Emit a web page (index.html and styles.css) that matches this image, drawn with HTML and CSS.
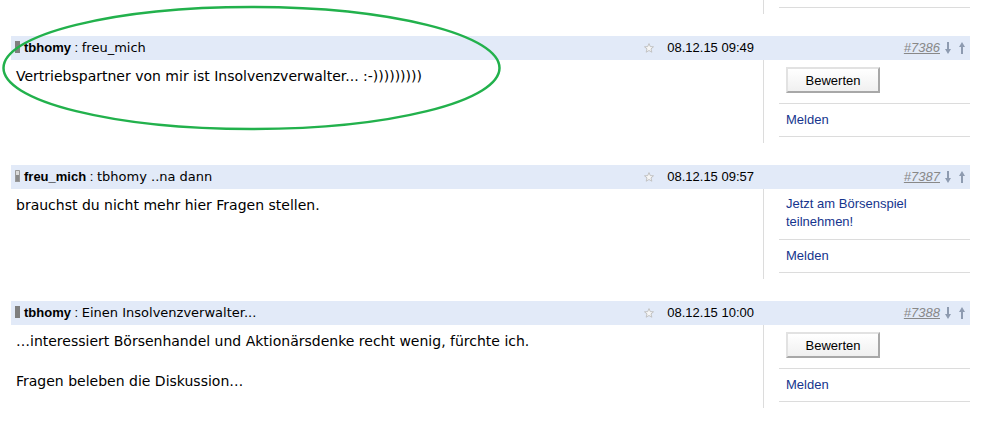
FILE: index.html
```html
<!DOCTYPE html>
<html lang="de">
<head>
<meta charset="utf-8">
<title>Forum</title>
<link rel="stylesheet" href="styles.css">
</head>
<body>
<div class="thread">
  <div class="row prev">
    <div class="main"></div>
    <div class="side"><div class="item stub"></div></div>
  </div>

  <div class="post">
    <div class="row head">
      <div class="hmain">
        <div class="who"><span class="lvl full"></span><b class="author">tbhomy</b><span class="colon"> : </span><span class="title">freu_mich</span></div>
        <div class="meta"><svg class="star" viewBox="0 0 10 10" width="10" height="10"><polygon points="5,0.6 6.3,3.6 9.5,3.8 7,5.9 7.8,9.2 5,7.5 2.2,9.2 3,5.9 0.5,3.8 3.7,3.6" /></svg><span class="date">08.12.15 09:49</span></div>
      </div>
      <div class="hside"><a class="num" href="#">#7386</a><svg class="arrow" viewBox="0 0 6 12" width="6" height="12"><path d="M2 0h2v7h2l-3 5l-3-5h2z" /></svg><svg class="arrow" viewBox="0 0 6 12" width="6" height="12"><path d="M2 12h2v-7h2l-3-5l-3 5h2z" /></svg></div>
    </div>
    <div class="row body">
      <div class="main"><p class="text">Vertriebspartner von mir ist Insolvenzverwalter... :-)))))))))</p></div>
      <div class="side">
        <div class="item btn"><button class="rate">Bewerten</button></div>
        <div class="item"><a class="link" href="#">Melden</a></div>
      </div>
    </div>
  </div>

  <div class="post">
    <div class="row head">
      <div class="hmain">
        <div class="who"><span class="lvl part"></span><b class="author">freu_mich</b><span class="colon"> : </span><span class="title">tbhomy ..na dann</span></div>
        <div class="meta"><svg class="star" viewBox="0 0 10 10" width="10" height="10"><polygon points="5,0.6 6.3,3.6 9.5,3.8 7,5.9 7.8,9.2 5,7.5 2.2,9.2 3,5.9 0.5,3.8 3.7,3.6" /></svg><span class="date">08.12.15 09:57</span></div>
      </div>
      <div class="hside"><a class="num" href="#">#7387</a><svg class="arrow" viewBox="0 0 6 12" width="6" height="12"><path d="M2 0h2v7h2l-3 5l-3-5h2z" /></svg><svg class="arrow" viewBox="0 0 6 12" width="6" height="12"><path d="M2 12h2v-7h2l-3-5l-3 5h2z" /></svg></div>
    </div>
    <div class="row body">
      <div class="main"><p class="text">brauchst du nicht mehr hier Fragen stellen.</p></div>
      <div class="side">
        <div class="item promo"><a class="link" href="#">Jetzt am Börsenspiel<br>teilnehmen!</a></div>
        <div class="item"><a class="link" href="#">Melden</a></div>
      </div>
    </div>
  </div>

  <div class="post">
    <div class="row head">
      <div class="hmain">
        <div class="who"><span class="lvl full"></span><b class="author">tbhomy</b><span class="colon"> : </span><span class="title">Einen Insolvenzverwalter...</span></div>
        <div class="meta"><svg class="star" viewBox="0 0 10 10" width="10" height="10"><polygon points="5,0.6 6.3,3.6 9.5,3.8 7,5.9 7.8,9.2 5,7.5 2.2,9.2 3,5.9 0.5,3.8 3.7,3.6" /></svg><span class="date">08.12.15 10:00</span></div>
      </div>
      <div class="hside"><a class="num" href="#">#7388</a><svg class="arrow" viewBox="0 0 6 12" width="6" height="12"><path d="M2 0h2v7h2l-3 5l-3-5h2z" /></svg><svg class="arrow" viewBox="0 0 6 12" width="6" height="12"><path d="M2 12h2v-7h2l-3-5l-3 5h2z" /></svg></div>
    </div>
    <div class="row body">
      <div class="main"><p class="text">…interessiert Börsenhandel und Aktionärsdenke recht wenig, fürchte ich.<br><br>Fragen beleben die Diskussion…</p></div>
      <div class="side">
        <div class="item btn"><button class="rate">Bewerten</button></div>
        <div class="item"><a class="link" href="#">Melden</a></div>
      </div>
    </div>
  </div>
</div>

<svg class="mark" width="988" height="421" viewBox="0 0 988 421"><ellipse cx="251.5" cy="68" rx="248" ry="61" /></svg>
</body>
</html>
```

FILE: styles.css
```css
html, body {
  margin: 0;
  padding: 0;
  background: #fff;
}
body {
  position: relative;
  width: 988px;
  height: 421px;
  overflow: hidden;
  font-family: "Liberation Sans", Arial, sans-serif;
  font-size: 13px;
  color: #000;
}
.thread {
  margin-left: 11px;
  width: 959px;
}
.row {
  display: grid;
  grid-template-columns: 752px 207px;
}
.side {
  border-left: 1px solid #dcdcdc;
  padding: 0 0 6px 15px;
}
.item {
  border-bottom: 1px solid #dcdcdc;
  padding: 7px 0 7px 7px;
  line-height: 18px;
}
.item.stub {
  height: 8px;
  padding: 0;
  box-sizing: border-box;
}
.item.btn {
  padding: 7px 0 10px 7px;
  line-height: 0;
}
.item.promo {
  padding: 6px 0 8px 7px;
}
.post {
  margin-top: 22px;
}
.head {
  background: #e2eaf8;
  height: 24px;
  line-height: 24px;
}
.hmain {
  display: flex;
  justify-content: space-between;
  padding: 0 9px 0 4px;
}
.who {
  display: flex;
  align-items: center;
  white-space: nowrap;
}
.lvl {
  flex: 0 0 5px;
  width: 5px;
  height: 12px;
  margin: 0 4px 0 0;
  background: #7f7f7f;
  position: relative;
  top: -1px;
}
.lvl.part {
  flex-basis: 5px;
  background: linear-gradient(#dadada 0 40%, #8a8a8a 40% 100%);
  box-shadow: inset 0 0 0 1px #999;
  border-radius: 1px;
}
.author {
  font-weight: bold;
}
.colon {
  white-space: pre;
}
.title {
  font-family: "DejaVu Sans", Verdana, sans-serif;
  font-size: 13px;
}
.meta {
  display: flex;
  align-items: center;
}
.star {
  margin-right: 13px;
}
.star polygon {
  fill: #f6f6f6;
  stroke: #bdbdbd;
  stroke-width: 0.9;
}
.date {
  font-size: 13px;
}
.hside {
  display: flex;
  justify-content: flex-end;
  align-items: center;
  padding-right: 5px;
  white-space: nowrap;
}
.num {
  color: #888;
  font-style: italic;
  font-size: 13px;
  text-decoration: underline;
  margin-right: 5px;
}
.arrow + .arrow {
  margin-left: 8px;
}
.arrow path {
  fill: #8e9bb0;
}
.text {
  margin: 0;
  padding: 6px 5px 0 5px;
  line-height: 20px;
  font-family: "DejaVu Sans", Verdana, sans-serif;
  font-size: 14px;
}
.rate {
  width: 94px;
  height: 26px;
  margin: 0;
  padding: 0;
  font-family: "Liberation Sans", Arial, sans-serif;
  font-size: 13px;
  color: #000;
  background: linear-gradient(#ffffff, #f0f0f0);
  border: 2px solid;
  border-color: #e2e2e2 #a8a8a8 #a8a8a8 #e2e2e2;
}
.link {
  color: #15358d;
  text-decoration: none;
}
.mark {
  position: absolute;
  left: 0;
  top: 0;
  pointer-events: none;
}
.mark ellipse {
  fill: none;
  stroke: #22b14c;
  stroke-width: 2.5;
}
```
